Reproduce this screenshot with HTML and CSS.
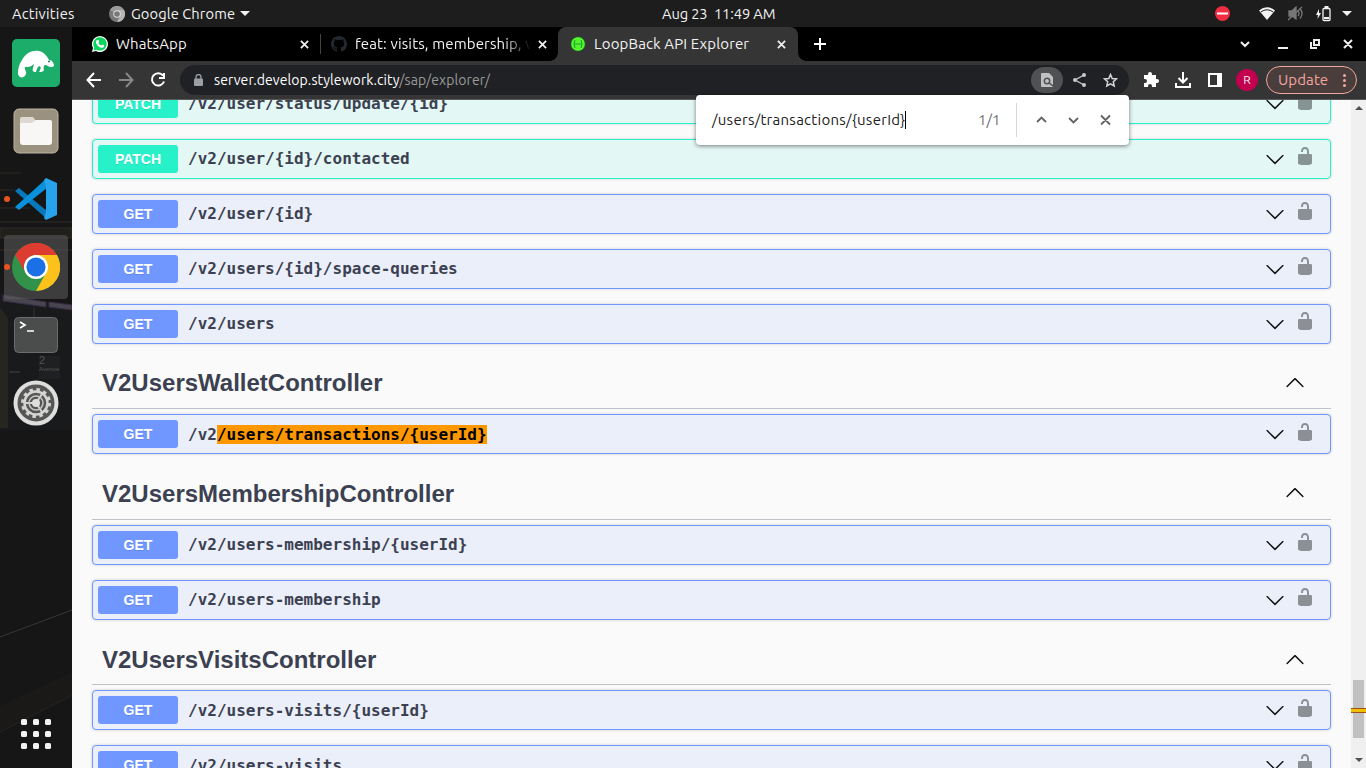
FILE: index.html
```html
<!DOCTYPE html>
<html lang="en">
<head>
<meta charset="utf-8">
<title>LoopBack API Explorer</title>
<link rel="stylesheet" href="styles.css">
</head>
<body>
<svg class="defs" width="0" height="0">
  <symbol id="down" viewBox="0 0 20 20"><path d="M17.4 6.1c.3-.3.7-.3 1 0 .3.3.3.7 0 1l-7.9 7.8c-.3.3-.7.3-1 0L1.600 7.100c-.3-.3-.3-.7 0-1 .3-.3.7-.3 1 0L10 13.300z"/></symbol>
  <symbol id="lock" viewBox="0 0 20 20"><path d="M15.800 8H14V5.600C14 2.700 12.665 1 10 1 7.334 1 6 2.700 6 5.600V6h2v-.801C8 3.754 8.797 3 10 3c1.203 0 2 .754 2 2.199V8H4c-.553 0-1 .646-1 1.199V17c0 .549.428 1.139.951 1.307l1.197.387C5.672 18.861 6.550 19 7.100 19h5.800c.549 0 1.428-.139 1.951-.307l1.196-.387c.524-.167.953-.757.953-1.306V9.199C17 8.646 16.352 8 15.800 8z"/></symbol>
  <symbol id="x" viewBox="0 0 10 10"><path d="M1 1l8 8M9 1L1 9"/></symbol>
</svg>
<header class="topbar">
  <span class="activities">Activities</span>
  <div class="appmenu">
    <svg width="16" height="16" viewBox="0 0 16 16"><circle cx="8" cy="8" r="8" fill="#777"/><path d="M8 8L1 4a8 8 0 0 1 14 0z" fill="#999"/><path d="M15 4H8l3 6-3 6A8 8 0 0 0 15 4z" fill="#b5b5b5"/><circle cx="8" cy="8" r="3.800" fill="#ddd"/><circle cx="8" cy="8" r="2.800" fill="#777"/></svg>
    <span class="appname">Google Chrome</span>
    <i class="caret"></i>
  </div>
  <span class="clock">Aug 23&nbsp; 11:49 AM</span>
  <div class="tray">
    <svg width="15" height="15"><circle cx="7.500" cy="7.500" r="7.500" fill="#f22c42"/><path d="M2 7.500h11" stroke="#fff" stroke-width="2"/></svg>
    <svg class="wifi" width="16" height="13" viewBox="0 0 16 13"><path d="M0 3.500Q8-3 16 3.500L8 13z" fill="#f2f2f2"/><path d="M1.800 5Q8 .5 14.200 5" fill="none" stroke="#1d1d1d"/></svg>
    <svg class="mute" width="16" height="15" viewBox="0 0 16 15"><g fill="none" stroke="#777" stroke-width="1.300"><path d="M1 5h3l4-4v12L4 10H1z" fill="#777"/><path d="M10 5q2 2.500 0 5M12 2.500q4 5 0 10M0 14L14 1"/></g></svg>
    <svg class="battery" width="16" height="16" viewBox="0 0 16 16"><path d="M3 3L0 9h2l-.5 4L5 7H3z" fill="#f2f2f2"/><rect x="7" y="2.500" width="7" height="12" rx="1" fill="none" stroke="#f2f2f2" stroke-width="1.300"/><path d="M8.500 1h4M8 12h5" stroke="#f2f2f2" stroke-width="2"/></svg>
    <i class="caret"></i>
  </div>
</header>
<div class="desktop">
  <nav class="dock">
    <svg class="wallpaper" width="72" height="741" viewBox="0 27 72 741"><rect y="27" width="72" height="741" fill="#161616"/><g opacity=".8"><path d="M0 173H21M0 190H14M0 208H30M0 222H72" stroke="#333128"/><path d="M0 228H72V238H0zM0 250h72" fill="#24221e" stroke="#34312b"/><path d="M0 293l72 14v123H0z" fill="#1a1c1e"/><path d="M3 295l43 7v5L3 301zM49 302l23 3v5l-23-3z" fill="#55515c" stroke="#413255"/><path d="M0 308l8 10v110H0z" fill="#2c2923"/><path d="M39 356h21v23H39z" fill="#202324"/><path d="M34 307v20" stroke="#3a3933"/></g><text x="39" y="364" class="sign">2</text><text x="39" y="371" class="sign small">Avenue</text><text x="9" y="373" class="sign tiny">venue</text><path d="M0 637L72 610" stroke="#373736"/><path d="M0 706L72 672v25L0 733z" fill="#1a1917"/><path d="M0 732L72 695" stroke="#242320"/></svg>
    <div class="app manatee"><svg width="48" height="48"><rect width="48" height="48" rx="5" fill="#1bad69"/><path d="M6 34c0-4 1-9 4-13C14 14 20 11 27 12c5 1 8 5 10 9 3 0 5 3 5 6-2 2-5 1-8-1-2 0-3 2-2 5-1 2-3 2-5 2 2-3 2-5 1-6-2 0-3 2-4 6-3 0-4-1-3-4l1-4c-3 3-6 3-9 3-1 2 2 5 1 7-1 3-4 4-6 3-1-1-2-2-2-4z" fill="#fff"/><circle cx="37" cy="22.500" r="1" fill="#1b7b53"/></svg></div>
    <div class="app"><svg width="46" height="46"><rect x="1" y="1" width="44" height="44" rx="5" fill="#9b917f" stroke="#bcb5a6"/><path d="M7 11q0-2 2-2h11l3 4v8H7z" fill="#ddd9d1"/><path d="M7 16q0-1 2-1h10l4-3h14q2 0 2 2v20q0 3-3 3H10q-3 0-3-3z" fill="#f8f7f5"/></svg></div>
    <div class="app run"><svg width="44" height="44" viewBox="0 0 44 44"><path d="M1 14l4-3 28 23v8L1 14z" fill="#0878bb"/><path d="M1 30l4 3L33 11V1L1 30z" fill="#0991db"/><path d="M32 1l11 5v32l-11 5-2-2 2-6V10l-2-7z" fill="#27a2ed"/></svg></div>
    <div class="app run current"><svg width="48" height="48" viewBox="0 0 48 48"><circle cx="24" cy="24" r="24" fill="#31934a"/><path d="M24 12h21A24 24 0 0 1 24 48l10-18z" fill="#fcc21b"/><path d="M3.200 12A24 24 0 0 1 45 12H24A12 12 0 0 0 13.600 30z" fill="#dd3c30"/><circle cx="24" cy="24" r="12" fill="#fff"/><circle cx="24" cy="24" r="9.600" fill="#1b6fe7"/></svg></div>
    <div class="app"><svg width="46" height="38"><rect x="1.500" y="1.500" width="43" height="35" rx="4" fill="#4b4c4c" stroke="#6c6c6c"/><path d="M7 6l5 3-5 3M14 15h7" fill="none" stroke="#fff" stroke-width="1.700"/></svg></div>
    <div class="app"><svg width="46" height="46"><circle cx="23" cy="23" r="20.500" fill="#565656" stroke="#dededc" stroke-width="4"/><circle cx="23" cy="23" r="13.500" fill="none" stroke="#d4d4d2" stroke-width="3" stroke-dasharray="3.500 3.570"/><circle cx="23" cy="23" r="11.500" fill="none" stroke="#d4d4d2" stroke-width="2.500"/><path d="M23 23H12M23 23l6-9M23 23l6 9" stroke="#d4d4d2" stroke-width="2"/><circle cx="23" cy="23" r="7" fill="none" stroke="#c6c6c4" stroke-width="1.500"/><circle cx="23" cy="23" r="4" fill="#dededc"/></svg></div>
    <div class="launcher"><i></i><i></i><i></i><i></i><i></i><i></i><i></i><i></i><i></i></div>
  </nav>
  <main class="window">
    <div class="tabs">
      <div class="tab wa"><svg width="16" height="16" viewBox="0 0 16 16"><path d="M0 16l1-4a8 8 0 1 1 3 3z" fill="#fff"/><path d="M1.500 14.500l.8-3a6.700 6.700 0 1 1 2.300 2.200z" fill="#08d55b"/><path d="M5 4l1.500 0 .7 2-.8 1q1 2 3 2.600l.9-1 2 .9c0 2-1.700 2.700-3.300 2.200C6.500 11 4.500 9 4 6.500 3.900 5.500 4.300 4.500 5 4z" fill="#fff"/></svg><span class="title">WhatsApp</span><svg class="close" width="9" height="9"><use href="#x"/></svg></div>
      <div class="tab gh"><svg width="16" height="16" viewBox="0 0 16 16"><path fill="#24292f" d="M8 0C3.580 0 0 3.580 0 8c0 3.540 2.290 6.530 5.470 7.590.4.070.55-.17.55-.38v-1.490c-2.010.37-2.530-.49-2.690-.94-.09-.23-.48-.94-.82-1.130-.28-.15-.68-.52-.01-.53.63-.01 1.080.58 1.230.82.72 1.210 1.870.87 2.330.66.07-.52.28-.87.51-1.070-1.780-.2-3.640-.89-3.640-3.950 0-.87.31-1.590.82-2.150-.08-.2-.36-1.020.08-2.120 0 0 .67-.21 2.200.82a7.400 7.400 0 0 1 4 0c1.530-1.040 2.200-.82 2.200-.82.44 1.100.16 1.920.08 2.120.51.56.82 1.270.82 2.150 0 3.070-1.870 3.750-3.650 3.950.29.25.54.73.54 1.480v2.200c0 .21.15.46.55.38A8 8 0 0 0 16 8c0-4.420-3.580-8-8-8z"/></svg><span class="title fade">feat: visits, membership, w</span><svg class="close" width="9" height="9"><use href="#x"/></svg></div>
      <div class="tab active"><svg width="16" height="16" viewBox="0 0 16 16"><circle cx="8" cy="8" r="7" fill="#53f82b"/><circle cx="8" cy="8" r="7.200" fill="none" stroke="#1d6a3a" stroke-dasharray="1.300 1.500"/><path d="M5 4q-2 4 0 8M11 4q2 4 0 8M4.500 8h7" fill="none" stroke="#1c9a3a"/></svg><span class="title">LoopBack API Explorer</span><svg class="close" width="9" height="9"><use href="#x"/></svg></div>
      <svg class="plus" width="12" height="12"><path d="M6 0v12M0 6h12" stroke="#fff" stroke-width="2"/></svg>
      <svg class="controls" width="113" height="14" fill="none" stroke="#eee" stroke-width="2"><path d="M1 5l4 4 4-4M38 11h10M74 3h5v5h-5zM71 5v6h6M104 3l8 8M112 3l-8 8"/></svg>
    </div>
    <div class="toolbar">
      <svg class="navs" width="80" height="16" fill="none" stroke-width="2"><path d="M15 8H2M8 1L1.500 8l6.500 7" stroke="#fff"/><path d="M33 8h13M40 1l6.500 7-6.500 7" stroke="#888"/><path d="M77 3.500A6.200 6.200 0 1 0 78 9.500M78 1v5h-5" stroke="#fff"/></svg>
      <div class="omnibox">
        <svg width="9" height="12"><path d="M2 5V3a2.500 2.500 0 0 1 5 0v2" fill="none" stroke="#9aa0a6" stroke-width="1.300"/><rect y="4.500" width="9" height="7.500" rx="1" fill="#9aa0a6"/></svg>
        <span class="url">server.develop.stylework.city<span class="path">/sap/explorer/</span></span>
        <span class="pill"><svg width="12" height="14"><path d="M1 0h7l4 4v9q0 1-1 1H1q-1 0-1-1V1q0-1 1-1z" fill="#bfc1c3"/><circle cx="6" cy="8" r="2.700" fill="none" stroke="#505153" stroke-width="1.500"/><path d="M8 10l4 3" stroke="#505153" stroke-width="1.500"/></svg></span>
        <svg class="share" width="13" height="14" fill="#c8c9cb"><path d="M11 2L2 7l9 5" fill="none" stroke="#c8c9cb" stroke-width="1.300"/><circle cx="11" cy="2" r="2"/><circle cx="2" cy="7" r="2"/><circle cx="11" cy="12" r="2"/></svg>
        <svg class="star" width="15" height="15" viewBox="0 0 15 15"><path d="M7.500 1.500l1.700 4 4.300.4-3.200 2.900.9 4.200-3.700-2.200L3.800 13l.9-4.200L1.500 5.900l4.300-.4z" fill="none" stroke="#d5d5d5" stroke-width="1.500"/></svg>
      </div>
      <svg class="puzzle" width="16" height="16"><path d="M1 3h4V2a2 2 0 0 1 4 0v1h4v4h1a2 2 0 0 1 0 4h-1v4H9v-1a2 2 0 0 0-4 0v1H1v-4h1a2 2 0 0 0 0-4H1z" fill="#fff"/></svg>
      <svg class="download" width="16" height="16"><path d="M8 0v10M3.500 6L8 10.500 12.500 6M1 11v4h14v-4" fill="none" stroke="#fff" stroke-width="2"/></svg>
      <svg class="panel" width="14" height="14"><path d="M0 0h14v14H0zM2 2v10h7V2z" fill="#fff" fill-rule="evenodd"/></svg>
      <span class="avatar">R</span>
      <span class="update">Update<i class="dots"></i></span>
    </div>
    <div class="page">
      <div class="scroller">
        <div class="op patch"><b>PATCH</b><code>/v2/user/status/update/{id}</code><svg class="arrow"><use href="#down"/></svg><svg class="lock"><use href="#lock"/></svg></div>
        <div class="op patch"><b>PATCH</b><code>/v2/user/{id}/contacted</code><svg class="arrow"><use href="#down"/></svg><svg class="lock"><use href="#lock"/></svg></div>
        <div class="op"><b>GET</b><code>/v2/user/{id}</code><svg class="arrow"><use href="#down"/></svg><svg class="lock"><use href="#lock"/></svg></div>
        <div class="op"><b>GET</b><code>/v2/users/{id}/space-queries</code><svg class="arrow"><use href="#down"/></svg><svg class="lock"><use href="#lock"/></svg></div>
        <div class="op"><b>GET</b><code>/v2/users</code><svg class="arrow"><use href="#down"/></svg><svg class="lock"><use href="#lock"/></svg></div>
        <h3 class="wallet">V2UsersWalletController<svg class="arrow up"><use href="#down"/></svg></h3>
        <div class="op"><b>GET</b><code>/v2<mark>/users/transactions/{userId}</mark></code><svg class="arrow"><use href="#down"/></svg><svg class="lock"><use href="#lock"/></svg></div>
        <h3 class="membership">V2UsersMembershipController<svg class="arrow up"><use href="#down"/></svg></h3>
        <div class="op"><b>GET</b><code>/v2/users-membership/{userId}</code><svg class="arrow"><use href="#down"/></svg><svg class="lock"><use href="#lock"/></svg></div>
        <div class="op"><b>GET</b><code>/v2/users-membership</code><svg class="arrow"><use href="#down"/></svg><svg class="lock"><use href="#lock"/></svg></div>
        <h3>V2UsersVisitsController<svg class="arrow up"><use href="#down"/></svg></h3>
        <div class="op"><b>GET</b><code>/v2/users-visits/{userId}</code><svg class="arrow"><use href="#down"/></svg><svg class="lock"><use href="#lock"/></svg></div>
        <div class="op"><b>GET</b><code>/v2/users-visits</code><svg class="arrow"><use href="#down"/></svg><svg class="lock"><use href="#lock"/></svg></div>
      </div>
      <div class="scrollbar"><i class="sbup"></i><i class="thumb"></i><i class="sbdown"></i></div>
    </div>
    <div class="find"><span class="query"><span class="querytext">/users/transactions/{userId}</span></span><span class="count">1/1</span>
      <svg class="findicons" width="76" height="12" fill="none" stroke="#5f6368" stroke-width="1.800"><path d="M1 8l4.500-4.500L10 8M33 4l4.500 4.500L42 4M65 1.500l9 9M74 1.500l-9 9"/></svg></div>
  </main>
</div>
</body>
</html>
```
FILE: styles.css
```css
* { box-sizing: border-box; }
body { margin: 0; width: 1366px; height: 768px; overflow: hidden; font: 15px/18px Ubuntu, "Noto Sans", sans-serif; color: #f2f2f2; background: #161616; white-space: nowrap; }
svg { display: block; flex: none; }
.defs { position: absolute; }
.topbar { height: 27px; background: #1d1d1d; display: flex; align-items: center; font-size: 14.67px; }
.activities { width: 97px; padding-left: 12px; letter-spacing: .25px; }
.appmenu { width: 553px; padding-left: 12px; display: flex; align-items: center; }
.appname { margin-left: 6px; width: 104px; letter-spacing: .1px; }
.caret { width: 0; height: 0; border: 5px solid transparent; border-top-color: #f2f2f2; border-bottom: 0; margin-left: 5px; }
.clock { width: 565px; padding-left: 12px; letter-spacing: -.12px; }
.tray { display: flex; align-items: center; }
.wifi { margin-left: 29px; }
.mute { margin-left: 13px; }
.battery { margin-left: 12px; }
.tray .caret { margin-left: 10px; }
.desktop { display: flex; height: 741px; }
.dock { width: 72px; position: relative; display: flex; flex-direction: column; align-items: center; padding-top: 1px; }
.wallpaper { position: absolute; left: 0; top: 0; }
.sign { font: 11px "Liberation Sans", sans-serif; fill: #55564f; }
.sign.small { font-size: 6px; }
.sign.tiny { font-size: 4px; }
.app { position: relative; width: 64px; height: 64px; margin-bottom: 4px; border-radius: 4px; display: flex; align-items: center; justify-content: center; flex: none; }
.manatee { height: 70px; margin-bottom: 1px; }
.current { background: rgba(100, 100, 100, .5); }
.run::before { content: ""; position: absolute; left: 0; top: 29px; width: 6px; height: 6px; border-radius: 50%; background: #e95420; }
.launcher { position: relative; display: grid; grid-template-columns: repeat(3, 6px); gap: 6px; margin-top: auto; margin-bottom: 19px; }
.launcher i { height: 6px; border-radius: 1.5px; background: #f2f2f0; }
.window { width: 1294px; position: relative; display: flex; flex-direction: column; }
.tabs { height: 34px; background: #000; display: flex; align-items: center; letter-spacing: .13px; }
.tab { height: 34px; display: flex; align-items: center; }
.title { flex: 1; margin-left: 8px; overflow: hidden; }
.close { stroke: #eee; stroke-width: 2; }
.wa { width: 249px; padding: 0 11px 0 20px; border-right: 1px solid #444; height: 20px; }
.gh { width: 237px; padding: 0 11px 0 10px; }
.gh .title { flex: none; width: 176px; }
.gh .close { margin-left: auto; }
.fade { -webkit-mask-image: linear-gradient(90deg, #000 84%, transparent); mask-image: linear-gradient(90deg, #000 84%, transparent); }
.active { position: relative; width: 240px; padding: 0 12px; background: #353535; border-radius: 8px 8px 0 0; }
.active::before, .active::after { content: ""; position: absolute; bottom: 0; width: 8px; height: 8px; }
.active::before { left: -8px; background: radial-gradient(circle at 0 0, transparent 7.5px, #353535 8px); }
.active::after { right: -8px; background: radial-gradient(circle at 100% 0, transparent 7.5px, #353535 8px); }
.plus { margin-left: 16px; }
.controls { margin-left: auto; margin-right: 13px; }
.toolbar { height: 39px; background: #353535; border-bottom: 1px solid #5a5858; display: flex; align-items: center; }
.navs { margin-left: 14px; }
.omnibox { width: 949px; height: 30px; margin-left: 14px; padding: 0 10px 0 14px; border-radius: 15px; background: #202124; display: flex; align-items: center; }
.url { width: 817px; margin-left: 11px; color: #fff; font-size: 14px; letter-spacing: .1px; }
.path { color: #9a9a9a; }
.pill { width: 32px; height: 26px; border-radius: 13px; background: #505153; display: flex; align-items: center; justify-content: center; }
.share { margin-left: 10px; }
.star { margin-left: 17px; }
.puzzle { margin-left: 14px; }
.download { margin-left: 16px; }
.panel { margin-left: 17px; }
.avatar { width: 22px; height: 22px; margin-left: 14px; border-radius: 50%; background: #c2004f; font-size: 12px; line-height: 22px; text-align: center; }
.update { width: 91px; height: 28px; margin-left: 8px; padding: 0 10px 0 11px; border: 1px solid #f4a69f; border-radius: 14px; background: #4a3e3d; color: #f4a69f; letter-spacing: .1px; display: flex; align-items: center; justify-content: space-between; }
.dots { width: 3px; height: 3px; border-radius: 50%; background: #f4a69f; box-shadow: 0 -5px #f4a69f, 0 5px #f4a69f; }
.page { height: 668px; display: flex; background: #fafafa; overflow: hidden; }
.scroller { width: 1279px; padding: 0 20px; height: 668px; overflow: hidden; }
.op { height: 40px; margin-bottom: 15px; padding: 0 15px 0 5px; border: 1px solid #6f97ff; border-radius: 4px; background: #ebeffa; box-shadow: 0 0 3px rgba(0, 0, 0, .19); display: flex; align-items: center; color: #3b4151; }
.op:first-child { margin-top: -16.1px; }
.patch { border-color: #27f1c8; background: #e3f7f4; }
.op b { width: 80px; height: 28px; border-radius: 3px; background: #6f97ff; color: #fff; font: bold 14px/28px "Liberation Sans", sans-serif; text-align: center; text-shadow: 0 1px 0 rgba(0, 0, 0, .1); }
.patch b { background: #27f1c8; }
.op code { flex: 1; margin-left: 10px; font: bold 16px/19px "DejaVu Sans Mono", monospace; color: #3b4151; }
mark { background: #ff9800; color: #000; }
.arrow { width: 20px; height: 20px; fill: #111; }
.lock { width: 20px; height: 20px; margin: -5px 0 0 10px; fill: #8d8f96; }
.patch .lock { fill: #889491; }
h3 { height: 50.5px; margin: 0 0 5px; padding: 0 26px 0 10px; border-bottom: 1px solid #bfc1c6; font: bold 24px/30px "Liberation Sans", sans-serif; color: #3b4151; display: flex; align-items: center; justify-content: space-between; }
.wallet { padding-bottom: 1px; }
.up { transform: rotate(180deg); }
.membership .up { margin-bottom: 2px; }
.scrollbar { width: 15px; background: #f0f0f0; display: flex; flex-direction: column; align-items: center; padding: 6px 0; }
.sbup { border: 4px solid transparent; border-bottom-color: #505050; border-top: 0; }
.thumb { position: relative; width: 11px; height: 58px; margin-top: 570px; background: #c1c1c1; }
.thumb::after { content: ""; position: absolute; left: -2px; top: 28px; width: 15px; height: 3px; background: #f0c000; border: solid #a45118; border-width: 1px 0; }
.sbdown { border: 4px solid transparent; border-top-color: #505050; border-bottom: 0; margin-top: auto; }
.find { position: absolute; left: 624px; top: 68px; width: 433px; height: 50px; background: #fff; border-radius: 4px; box-shadow: 0 1px 4px rgba(0, 0, 0, .5); display: flex; align-items: center; color: #222; font-size: 15px; }
.query { width: 267px; padding-left: 16px; display: flex; }
.querytext { border-right: 1px solid #000; letter-spacing: .27px; }
.count { width: 54px; height: 34px; line-height: 34px; padding-left: 15px; border-right: 1px solid #d6d7dc; color: #6b6e73; }
.findicons { margin-left: 19px; }
```
